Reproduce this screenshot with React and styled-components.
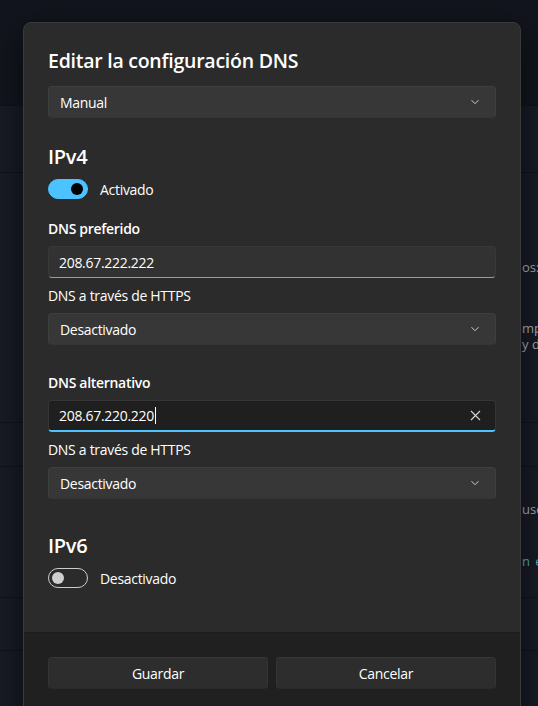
import React from 'react';
import styled, { createGlobalStyle } from 'styled-components';

const GlobalStyle = createGlobalStyle`
  html, body {
    margin: 0;
    padding: 0;
    background: #12151d;
    overflow: hidden;
  }
  body {
    font-family: "Open Sans", "Noto Sans", sans-serif;
    -webkit-font-smoothing: antialiased;
  }
`;

const Screen = styled.div`
  position: relative;
  width: 538px;
  height: 706px;
  overflow: hidden;
  background: #12151d;
`;

// settings page that sits behind the dialog
const Backdrop = styled.div`
  display: flex;
  flex-direction: column;
  height: 100%;
`;

const TopBand = styled.div`
  height: 105px;
  flex-shrink: 0;
  background: #12151d;
`;

const Panel = styled.div`
  flex: 1;
  display: flex;
  flex-direction: column;
  background: #181a25;
`;

const PanelRow = styled.div`
  height: ${p => p.$h}px;
  flex-shrink: 0;
  box-sizing: border-box;
  border-top: 1px solid #10121a;
  padding: ${p => p.$top || 0}px 0 0 522px;
  display: flex;
  flex-direction: column;
`;

const Peek = styled.span`
  display: block;
  margin-top: ${p => p.$mt || 0}px;
  font-size: 13px;
  line-height: 16px;
  white-space: nowrap;
  color: ${p => (p.$link ? '#5aa9b8' : '#a9acb4')};
  letter-spacing: ${p => (p.$link ? '1px' : '0')};
`;

const Dialog = styled.div`
  position: absolute;
  left: 23px;
  top: 22px;
  width: 498px;
  height: 720px;
  box-sizing: border-box;
  display: flex;
  flex-direction: column;
  background: #2b2b2b;
  border: 1px solid #3a3a3a;
  border-radius: 8px;
  box-shadow: 0 8px 32px rgba(0, 0, 0, 0.55);
  overflow: hidden;
  color: #ffffff;
  letter-spacing: -0.3px;
`;

const Body = styled.div`
  padding: 24px 24px 44px;
  display: flex;
  flex-direction: column;
`;

const Title = styled.h1`
  margin: 0 0 11px;
  font-size: 19.5px;
  line-height: 28px;
  font-weight: 600;
  letter-spacing: -0.25px;
`;

const SectionTitle = styled.h2`
  margin: ${p => p.$mt || 0}px 0 8px;
  font-size: 20px;
  line-height: 28px;
  font-weight: 600;
`;

const FieldLabel = styled.div`
  margin: ${p => p.$mt || 0}px 0 7px;
  font-size: 14px;
  line-height: 20px;
  font-weight: ${p => (p.$strong ? 600 : 400)};
`;

const Select = styled.div`
  height: 32px;
  box-sizing: border-box;
  display: flex;
  align-items: center;
  justify-content: space-between;
  padding: 0 15px 0 11px;
  background: #373737;
  border: 1px solid #3e3e3e;
  border-bottom-color: #343434;
  border-radius: 4px;
  font-size: 14px;
`;

const Input = styled.div`
  height: 32px;
  box-sizing: border-box;
  display: flex;
  align-items: center;
  justify-content: space-between;
  padding: 0 14px 0 10px;
  border-radius: 4px;
  border: 1px solid ${p => (p.$focused ? '#363636' : '#383838')};
  border-bottom: ${p => (p.$focused ? '2px solid #4cc2ff' : '1px solid #9a9a9a')};
  background: ${p => (p.$focused ? '#1f1f1f' : '#323232')};
  font-size: 14px;
`;

const Value = styled.span`
  display: flex;
  align-items: center;
`;

const Caret = styled.span`
  width: 1px;
  height: 17px;
  margin-left: 1px;
  background: #ffffff;
`;

const ToggleRow = styled.div`
  display: flex;
  align-items: center;
  gap: 12px;
  height: 20px;
  font-size: 14px;
`;

const Track = styled.span`
  width: 40px;
  height: 20px;
  box-sizing: border-box;
  display: flex;
  align-items: center;
  justify-content: ${p => (p.$on ? 'flex-end' : 'flex-start')};
  padding: 0 ${p => (p.$on ? 4 : 3)}px;
  border-radius: 10px;
  background: ${p => (p.$on ? '#4cc2ff' : 'transparent')};
  border: 1px solid ${p => (p.$on ? '#4cc2ff' : '#cdcdcd')};
`;

const Knob = styled.span`
  width: 12px;
  height: 12px;
  border-radius: 50%;
  background: ${p => (p.$on ? '#000000' : '#cfcfcf')};
`;

const Footer = styled.div`
  flex: 1;
  background: #202020;
  border-top: 1px solid #1d1d1d;
  padding: 24px;
  display: grid;
  grid-template-columns: 1fr 1fr;
  gap: 8px;
  align-content: start;
`;

const Button = styled.button`
  height: 32px;
  border-radius: 4px;
  border: 1px solid #343434;
  border-top-color: #383838;
  border-bottom-color: #2a2a2a;
  background: #2d2d2d;
  color: #ffffff;
  font-family: inherit;
  font-size: 14px;
  letter-spacing: -0.3px;
`;

const Chevron = () => (
  <svg width="10" height="10" viewBox="0 0 10 10">
    <path d="M1.5 3.2 L5 6.7 L8.5 3.2" fill="none" stroke="#cfcfcf" strokeWidth="1" />
  </svg>
);

const ClearIcon = () => (
  <svg width="11" height="11" viewBox="0 0 11 11">
    <path d="M1 1 L10 10 M10 1 L1 10" fill="none" stroke="#d6d6d6" strokeWidth="1.1" />
  </svg>
);

const Toggle = ({ on, label }) => (
  <ToggleRow>
    <Track $on={on}><Knob $on={on} /></Track>
    <span>{label}</span>
  </ToggleRow>
);

export default function App() {
  return (
    <Screen>
      <GlobalStyle />
      <Backdrop>
        <TopBand />
        <Panel>
          <PanelRow $h={67} />
          <PanelRow $h={250} $top={86}>
            <Peek>os:</Peek>
            <Peek $mt={45}>mp</Peek>
            <Peek>y di</Peek>
          </PanelRow>
          <PanelRow $h={44} />
          <PanelRow $h={131} $top={34}>
            <Peek>use</Peek>
            <Peek $mt={36} $link>n e</Peek>
          </PanelRow>
          <PanelRow $h={53} />
          <PanelRow $h={60} />
        </Panel>
      </Backdrop>

      <Dialog>
        <Body>
          <Title>Editar la configuración DNS</Title>
          <Select>Manual<Chevron /></Select>

          <SectionTitle $mt={25}>IPv4</SectionTitle>
          <Toggle on label="Activado" />

          <FieldLabel $strong $mt={20}>DNS preferido</FieldLabel>
          <Input><Value>208.67.222.222</Value></Input>
          <FieldLabel $mt={8}>DNS a través de HTTPS</FieldLabel>
          <Select>Desactivado<Chevron /></Select>

          <FieldLabel $strong $mt={28}>DNS alternativo</FieldLabel>
          <Input $focused>
            <Value>208.67.220.220<Caret /></Value>
            <ClearIcon />
          </Input>
          <FieldLabel $mt={8}>DNS a través de HTTPS</FieldLabel>
          <Select>Desactivado<Chevron /></Select>

          <SectionTitle $mt={33}>IPv6</SectionTitle>
          <Toggle label="Desactivado" />
        </Body>
        <Footer>
          <Button>Guardar</Button>
          <Button>Cancelar</Button>
        </Footer>
      </Dialog>
    </Screen>
  );
}
